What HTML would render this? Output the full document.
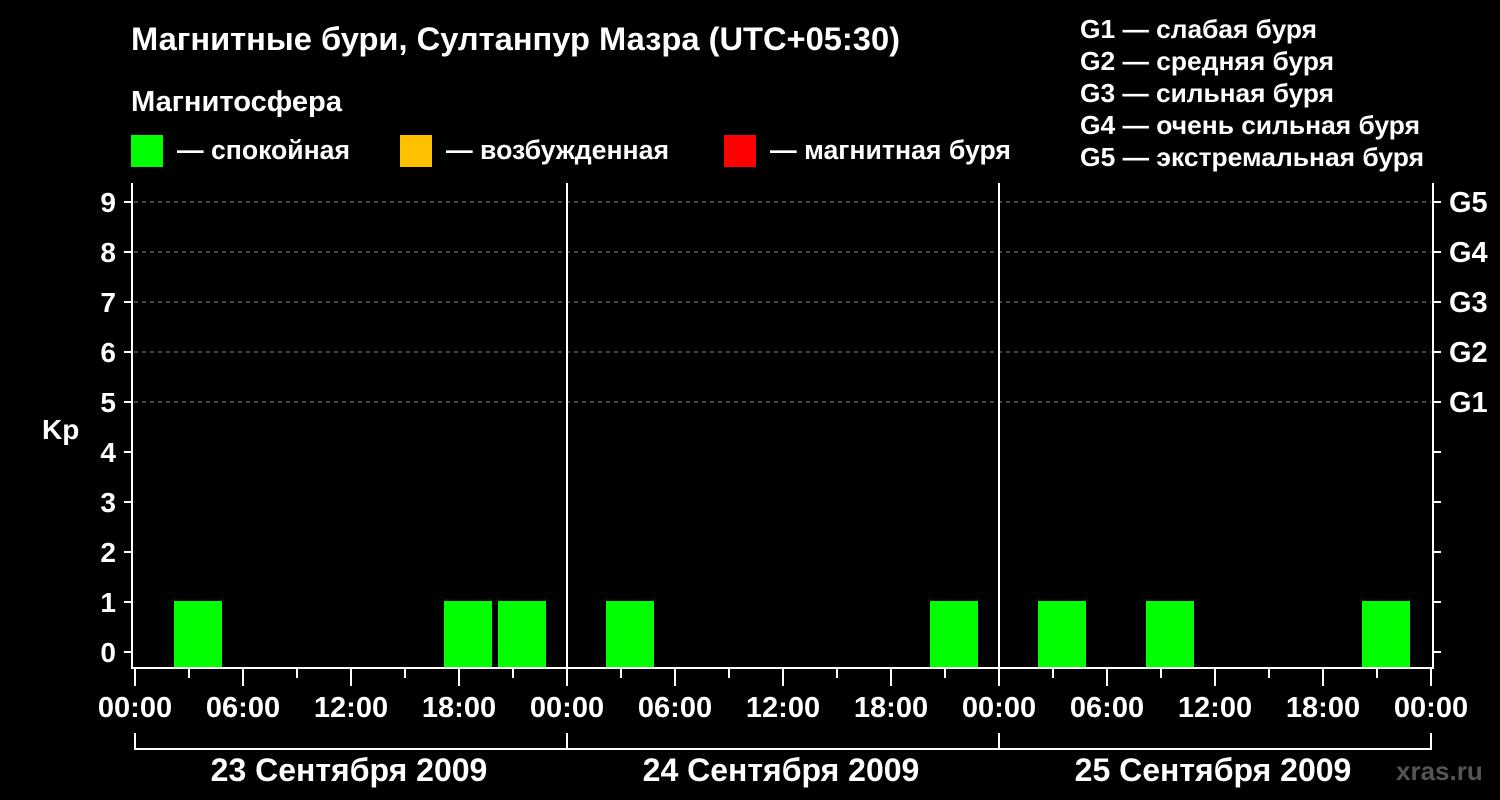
<!DOCTYPE html>
<html><head><meta charset="utf-8"><style>
html,body{margin:0;padding:0;background:#000;width:1500px;height:800px;overflow:hidden}
svg{display:block}
text{font-family:"Liberation Sans",Arial,sans-serif;font-weight:bold;fill:#fff}
</style></head><body>
<svg width="1500" height="800" viewBox="0 0 1500 800">
<rect width="1500" height="800" fill="#000"/>
<text x="131" y="50" font-size="32" textLength="769" lengthAdjust="spacingAndGlyphs">Магнитные бури, Султанпур Мазра (UTC+05:30)</text>
<text x="131" y="111" font-size="29" textLength="211" lengthAdjust="spacingAndGlyphs">Магнитосфера</text>
<rect x="131" y="135" width="32" height="32" fill="#00ff00"/>
<text x="177" y="159" font-size="27" textLength="173" lengthAdjust="spacingAndGlyphs">— спокойная</text>
<rect x="400" y="135" width="32" height="32" fill="#ffc000"/>
<text x="446" y="159" font-size="27" textLength="223" lengthAdjust="spacingAndGlyphs">— возбужденная</text>
<rect x="724" y="135" width="32" height="32" fill="#ff0000"/>
<text x="770" y="159" font-size="27" textLength="241" lengthAdjust="spacingAndGlyphs">— магнитная буря</text>
<g font-size="26">
<text x="1080" y="38" textLength="237" lengthAdjust="spacingAndGlyphs">G1 — слабая буря</text>
<text x="1080" y="70" textLength="254" lengthAdjust="spacingAndGlyphs">G2 — средняя буря</text>
<text x="1080" y="102" textLength="254" lengthAdjust="spacingAndGlyphs">G3 — сильная буря</text>
<text x="1080" y="134" textLength="340" lengthAdjust="spacingAndGlyphs">G4 — очень сильная буря</text>
<text x="1080" y="166" textLength="344" lengthAdjust="spacingAndGlyphs">G5 — экстремальная буря</text>
</g>
<g stroke="#888" stroke-width="1" stroke-dasharray="4,4">
<line x1="134" y1="202" x2="1431" y2="202"/>
<line x1="134" y1="252" x2="1431" y2="252"/>
<line x1="134" y1="302" x2="1431" y2="302"/>
<line x1="134" y1="352" x2="1431" y2="352"/>
<line x1="134" y1="402" x2="1431" y2="402"/>
</g>
<g fill="#00ff00">
<rect x="174" y="601" width="48" height="66"/>
<rect x="444" y="601" width="48" height="66"/>
<rect x="498" y="601" width="48" height="66"/>
<rect x="606" y="601" width="48" height="66"/>
<rect x="930" y="601" width="48" height="66"/>
<rect x="1038" y="601" width="48" height="66"/>
<rect x="1146" y="601" width="48" height="66"/>
<rect x="1362" y="601" width="48" height="66"/>
</g>
<g stroke="#fff" stroke-width="2" fill="none">
<polyline points="132,183 132,668 1433,668 1433,183"/>
<line x1="567" y1="183" x2="567" y2="668"/>
<line x1="999" y1="183" x2="999" y2="668"/>
<line x1="124" y1="202" x2="132" y2="202"/><line x1="124" y1="252" x2="132" y2="252"/>
<line x1="124" y1="302" x2="132" y2="302"/><line x1="124" y1="352" x2="132" y2="352"/>
<line x1="124" y1="402" x2="132" y2="402"/><line x1="124" y1="452" x2="132" y2="452"/>
<line x1="124" y1="502" x2="132" y2="502"/><line x1="124" y1="552" x2="132" y2="552"/>
<line x1="124" y1="602" x2="132" y2="602"/><line x1="124" y1="652" x2="132" y2="652"/>
<line x1="1433" y1="202" x2="1441" y2="202"/><line x1="1433" y1="252" x2="1441" y2="252"/>
<line x1="1433" y1="302" x2="1441" y2="302"/><line x1="1433" y1="352" x2="1441" y2="352"/>
<line x1="1433" y1="402" x2="1441" y2="402"/><line x1="1433" y1="452" x2="1441" y2="452"/>
<line x1="1433" y1="502" x2="1441" y2="502"/><line x1="1433" y1="552" x2="1441" y2="552"/>
<line x1="1433" y1="602" x2="1441" y2="602"/><line x1="1433" y1="652" x2="1441" y2="652"/>
<line x1="135" y1="668" x2="135" y2="686"/><line x1="189" y1="668" x2="189" y2="678"/>
<line x1="243" y1="668" x2="243" y2="686"/><line x1="297" y1="668" x2="297" y2="678"/>
<line x1="351" y1="668" x2="351" y2="686"/><line x1="405" y1="668" x2="405" y2="678"/>
<line x1="459" y1="668" x2="459" y2="686"/><line x1="513" y1="668" x2="513" y2="678"/>
<line x1="567" y1="668" x2="567" y2="686"/><line x1="621" y1="668" x2="621" y2="678"/>
<line x1="675" y1="668" x2="675" y2="686"/><line x1="729" y1="668" x2="729" y2="678"/>
<line x1="783" y1="668" x2="783" y2="686"/><line x1="837" y1="668" x2="837" y2="678"/>
<line x1="891" y1="668" x2="891" y2="686"/><line x1="945" y1="668" x2="945" y2="678"/>
<line x1="999" y1="668" x2="999" y2="686"/><line x1="1053" y1="668" x2="1053" y2="678"/>
<line x1="1107" y1="668" x2="1107" y2="686"/><line x1="1161" y1="668" x2="1161" y2="678"/>
<line x1="1215" y1="668" x2="1215" y2="686"/><line x1="1269" y1="668" x2="1269" y2="678"/>
<line x1="1323" y1="668" x2="1323" y2="686"/><line x1="1377" y1="668" x2="1377" y2="678"/>
<line x1="1431" y1="668" x2="1431" y2="686"/>
<polyline points="135,733 135,749 1431,749 1431,733"/>
<line x1="567" y1="733" x2="567" y2="749"/>
<line x1="999" y1="733" x2="999" y2="749"/>
</g>
<g font-size="28" text-anchor="end">
<text x="116" y="212">9</text><text x="116" y="262">8</text><text x="116" y="312">7</text>
<text x="116" y="362">6</text><text x="116" y="412">5</text><text x="116" y="462">4</text>
<text x="116" y="512">3</text><text x="116" y="562">2</text><text x="116" y="612">1</text>
<text x="116" y="662">0</text>
</g>
<text x="42" y="439" font-size="28">Kp</text>
<g font-size="29">
<text x="1449" y="212">G5</text><text x="1449" y="262">G4</text><text x="1449" y="312">G3</text>
<text x="1449" y="362">G2</text><text x="1449" y="412">G1</text>
</g>
<g font-size="29" text-anchor="middle">
<text x="135" y="717">00:00</text><text x="243" y="717">06:00</text><text x="351" y="717">12:00</text>
<text x="459" y="717">18:00</text><text x="567" y="717">00:00</text><text x="675" y="717">06:00</text>
<text x="783" y="717">12:00</text><text x="891" y="717">18:00</text><text x="999" y="717">00:00</text>
<text x="1107" y="717">06:00</text><text x="1215" y="717">12:00</text><text x="1323" y="717">18:00</text>
<text x="1431" y="717">00:00</text>
<text x="349" y="781" font-size="32">23 Сентября 2009</text>
<text x="781" y="781" font-size="32">24 Сентября 2009</text>
<text x="1213" y="781" font-size="32">25 Сентября 2009</text>
</g>
<text x="1396" y="780" font-size="26" style="fill:#555">xras.ru</text>
</svg>
</body></html>
